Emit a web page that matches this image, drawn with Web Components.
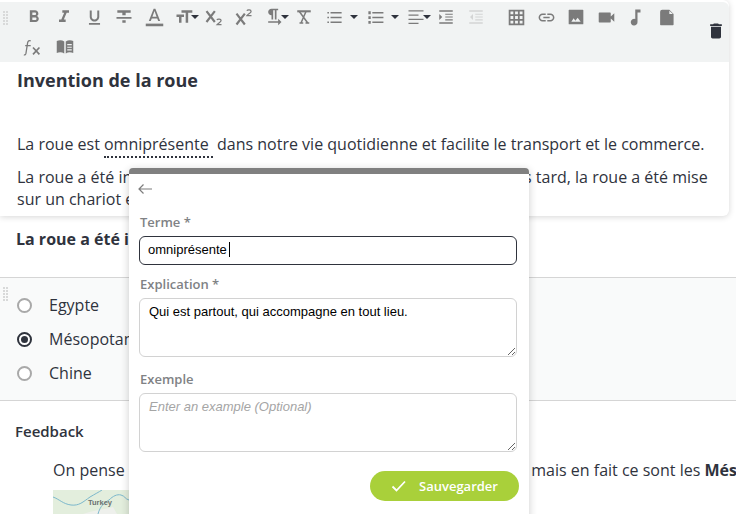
<!DOCTYPE html>
<html lang="fr">
<head>
<meta charset="utf-8">
<title>Invention de la roue</title>
<style>
  html, body { margin: 0; height: 100%; overflow: hidden; background: #fff; }
  body { font-family: "Open Sans", sans-serif; color: #2f333d; font-size: 16px; }
  #page { position: relative; height: 514px; overflow: hidden; }
</style>
</head>
<body>
<div id="page">
  <editor-card>
    <rich-toolbar slot="tb"></rich-toolbar>
    <h3 slot="title">Invention de la roue</h3>
    <p>La roue est <gloss-term>omniprésente&nbsp;</gloss-term> dans notre vie quotidienne et facilite le transport et le commerce.</p>
    <p>La roue a été inventée en Mésopotamie, il y a environ 5 500 <span style="margin-right:2px">ans.</span> Plus tard, la roue a été mise<br>sur un chariot et attelée à des animaux.</p>
  </editor-card>
  <question-title>La roue a été inventée où ?</question-title>
  <option-list>
    <radio-option>Egypte</radio-option>
    <radio-option checked>Mésopotamie</radio-option>
    <radio-option>Chine</radio-option>
  </option-list>
  <feedback-block>
    On pense souvent que ce sont les Grecs qui ont inventé la roue, mais en fait ce sont les <b>Mésopotamiens</b>
  </feedback-block>
  <term-popup>
    <form-field label="Terme *" kind="input">omniprésente</form-field>
    <form-field label="Explication *" kind="area">Qui est partout, qui accompagne en tout lieu.</form-field>
    <form-field label="Exemple" kind="area" placeholder>Enter an example (Optional)</form-field>
    <save-button>Sauvegarder</save-button>
  </term-popup>
</div>

<script>
// toolbar icons, 24x24 box
const ICONS = {
  bold: '<path d="M15.6 10.79c.97-.67 1.65-1.77 1.65-2.79 0-2.26-1.75-4-4-4H7v14h7.04c2.09 0 3.71-1.7 3.71-3.79 0-1.52-.86-2.82-2.15-3.42zM10 6.5h3c.83 0 1.5.67 1.5 1.5s-.67 1.5-1.5 1.5h-3v-3zm3.5 9H10v-3h3.5c.83 0 1.5.67 1.5 1.5s-.67 1.5-1.5 1.5z"/>',
  italic: '<path d="M10 4v3h2.21l-3.42 8H6v3h8v-3h-2.21l3.42-8H18V4z"/>',
  underline: '<path d="M12 17c3.31 0 6-2.69 6-6V3h-2.5v8c0 1.93-1.57 3.5-3.5 3.5S8.5 12.93 8.5 11V3H6v8c0 3.31 2.69 6 6 6zm-7 2v2h14v-2H5z"/>',
  strike: '<path d="M10 19h4v-3h-4v3zM4 4v3h6v3h4V7h6V4H4zM3 14h18v-2H3v2z"/>',
  color: '<path d="M11 2L5.5 16h2.25l1.12-3h6.25l1.12 3h2.25L13 2h-2zm-1.38 9L12 4.67 14.38 11H9.62z"/><rect x="2" y="19" width="20" height="3"/>',
  size: '<path d="M9 4v3h5v12h3V7h5V4H9zm-6 8h3v7h3v-7h3V9H3v3z"/>',
  sub: '<path d="M3 5l10 13M13 5L3 18" fill="none" stroke="currentColor" stroke-width="2.6"/><path d="M15.5 15.5c.6-1.4 5-1.7 5 .8 0 2-3.2 2.5-5 5H21" fill="none" stroke="currentColor" stroke-width="1.5"/>',
  sup: '<path d="M3 8l10 13M13 8L3 21" fill="none" stroke="currentColor" stroke-width="2.6"/><path d="M15.5 4.500c.6-1.400 5-1.700 5 .8 0 2-3.200 2.500-5 5H21" fill="none" stroke="currentColor" stroke-width="1.5"/>',
  para: '<path d="M9 10v5h2V4h2v11h2V4h2V2H9C6.79 2 5 3.79 5 6s1.79 4 4 4zm12 8l-4-4v3H5v2h12v3l4-4z"/>',
  clear: '<path d="M3 3h18v2.8H3z"/><path d="M6 5l11 15M14.5 5L8 20M6 20h5M14 20h5" fill="none" stroke="currentColor" stroke-width="2"/>',
  ul: '<path d="M3 5h2v2H3zM3 11h2v2H3zM3 17h2v2H3zM7 5h14v2H7zM7 11h14v2H7zM7 17h14v2H7z"/>',
  ol: '<path d="M3 4h3v4H3zM3 10.5h3V14H3zM3 16.5h3V20H3zM8 5h14v2H8zM8 11h14v2H8zM8 17h14v2H8z"/>',
  align: '<path d="M3 4h18v1.5H3zM3 9h12v1.5H3zM3 14h18v1.5H3zM3 19h12v1.5H3z"/>',
  indent: '<path d="M3 3h18v2H3zM11 7.5h10V9H11zM11 11.2h10v1.5H11zM11 15h10v1.5H11zM3 19h18v2H3zM3 8l4 4-4 4z"/>',
  outdent: '<path d="M3 3h18v2H3zM11 7.5h10V9H11zM11 11.2h10v1.5H11zM11 15h10v1.5H11zM3 19h18v2H3zM8 8l-4 4 4 4z"/>',
  table: '<path fill-rule="evenodd" d="M1 1h22v22H1zM3.500 3.500v4h4v-4zM10 3.500v4h4v-4zM16.500 3.500v4h4v-4zM3.500 10v4h4v-4zM10 10v4h4v-4zM16.500 10v4h4v-4zM3.500 16.500v4h4v-4zM10 16.500v4h4v-4zM16.500 16.500v4h4v-4z"/>',
  link: '<path d="M3.9 12c0-1.71 1.39-3.1 3.1-3.1h4V7H7c-2.76 0-5 2.24-5 5s2.24 5 5 5h4v-1.9H7c-1.71 0-3.1-1.39-3.1-3.1zM8 13h8v-2H8v2zm9-6h-4v1.9h4c1.71 0 3.1 1.39 3.1 3.1s-1.39 3.1-3.1 3.1h-4V17h4c2.76 0 5-2.24 5-5s-2.24-5-5-5z"/>',
  image: '<path fill-rule="evenodd" d="M2 1h20a1 1 0 0 1 1 1v20a1 1 0 0 1-1 1H2a1 1 0 0 1-1-1V2a1 1 0 0 1 1-1zM5 19h14l-4.500-6-3.500 4.500L8.500 14z"/>',
  video: '<path d="M1 6a1 1 0 0 1 1-1h15a1 1 0 0 1 1 1v4.500L23 6v12l-5-4.500V18a1 1 0 0 1-1 1H2a1 1 0 0 1-1-1z"/>',
  music: '<path d="M11 2v12.550A4.500 4.500 0 1 0 14 18.500V6h4V2z"/>',
  file: '<path d="M6 1h10l6 6v15a1 1 0 0 1-1 1H4a1 1 0 0 1-1-1V4a3 3 0 0 1 3-3zM16 2.500V7h5z" fill-rule="evenodd"/>',
  fx: '<path d="M9.500 5.200c-1.800-.6-3 .2-3.400 2.300L4.300 19c-.3 1.500-1 1.900-2.300 1.500" fill="none" stroke="currentColor" stroke-width="1.4"/><path d="M3.500 10.500h6" stroke="currentColor" stroke-width="1.4"/><path d="M12 12.500l7 7.500M19 12.500L12 20" stroke="currentColor" stroke-width="1.8"/>',
  book: '<path fill-rule="evenodd" d="M1 4c3-1.500 7-1.500 10 .5v16c-3-2-7-2-10-.5zM13 4.500c3-2 7-2 10-.5v16c-3-1.500-7-1.500-10 .5zM15 8v1.500h6V8zM15 11.500v1.500h6v-1.500zM15 15v1.500h6V15z"/>',
  trash: '<path d="M6 19c0 1.100.9 2 2 2h8c1.100 0 2-.9 2-2V7H6v12zM19 4h-3.500l-1-1h-5l-1 1H5v2h14V4z"/>'
};

function dots(cols, rows) {
  let out = '';
  for (let c = 0; c < cols; c++) {
    for (let r = 0; r < rows; r++) {
      out += `<rect x="${c * 3}" y="${r * 3}" width="2" height="2"/>`;
    }
  }
  return `<svg width="${cols * 3}" height="${rows * 3}" fill="#d8d9d9">${out}</svg>`;
}

class ToolBtn extends HTMLElement {
  connectedCallback() {
    const w = this.getAttribute('w') || 30;
    const s = this.getAttribute('s') || 20;
    const caret = this.getAttribute('caret');
    const color = this.getAttribute('color') || '#7b7b7b';
    this.attachShadow({ mode: 'open' });
    this.shadowRoot.innerHTML = `
      <style>
        :host { display: block; position: relative; width: ${w}px; height: 30px; color: ${color}; }
        .in { display: flex; align-items: center; justify-content: center; height: 100%; }
        .in.left { justify-content: flex-start; padding-left: ${this.getAttribute('pad') || 0}px; }
        svg { fill: currentColor; display: block; }
        .caret { position: absolute; top: 13px; left: ${caret}px; border: 4px solid transparent; border-top: 4px solid #2f333d; border-bottom: 0; }
      </style>
      <div class="in ${this.hasAttribute('pad') ? 'left' : ''}">
        <svg width="${s}" height="${s}" viewBox="0 0 24 24">${ICONS[this.getAttribute('icon')]}</svg>
      </div>
      ${caret ? '<span class="caret"></span>' : ''}`;
  }
}
customElements.define('tool-btn', ToolBtn);

class RichToolbar extends HTMLElement {
  connectedCallback() {
    this.attachShadow({ mode: 'open' });
    this.shadowRoot.innerHTML = `
      <style>
        :host { display: flex; align-items: center; height: 60px; margin-top: 2px; background: #f1f3f3; border-radius: 0 6px 0 0; position: relative; }
        .grip { width: 19px; flex: none; padding-left: 3px; box-sizing: border-box; align-self: flex-start; padding-top: 7px; }
        .rows { flex: 1; }
        .row { display: flex; height: 30px; }
        .trash { width: 30px; margin: 0 -2px 2px 0; display: flex; justify-content: center; }
        .gap { width: 10px; }
      </style>
      <div class="grip">${dots(2, 5)}</div>
      <div class="rows">
        <div class="row">
          <tool-btn icon="bold"></tool-btn><tool-btn icon="italic"></tool-btn><tool-btn icon="underline" s="19"></tool-btn>
          <tool-btn icon="strike"></tool-btn><tool-btn icon="color" s="21"></tool-btn><tool-btn icon="size" s="20" caret="22"></tool-btn>
          <tool-btn icon="sub" s="20"></tool-btn><tool-btn icon="sup" s="20"></tool-btn><tool-btn icon="para" s="20" caret="22"></tool-btn>
          <tool-btn icon="clear" s="18"></tool-btn><tool-btn icon="ul" s="19" w="42" pad="6" caret="31"></tool-btn>
          <tool-btn icon="ol" s="19" w="44" pad="5" caret="30"></tool-btn><tool-btn icon="align" s="20" w="26" pad="1" caret="18"></tool-btn>
          <tool-btn icon="indent" s="18"></tool-btn><tool-btn icon="outdent" s="18" color="#d4d5d5"></tool-btn><div class="gap"></div>
          <tool-btn icon="table" s="17"></tool-btn><tool-btn icon="link" s="19"></tool-btn><tool-btn icon="image" s="16"></tool-btn>
          <tool-btn icon="video" s="17"></tool-btn><tool-btn icon="music" s="18"></tool-btn><tool-btn icon="file" s="17"></tool-btn>
        </div>
        <div class="row" style="margin-left:-1px">
          <tool-btn icon="fx" s="22"></tool-btn><tool-btn icon="book" s="18" w="34"></tool-btn>
        </div>
      </div>
      <div class="trash"><tool-btn icon="trash" color="#2f333d" s="20"></tool-btn></div>`;
  }
}
customElements.define('rich-toolbar', RichToolbar);

class EditorCard extends HTMLElement {
  connectedCallback() {
    this.attachShadow({ mode: 'open' });
    this.shadowRoot.innerHTML = `
      <style>
        :host { display: block; width: 729px; height: 216px; background: #fff; border-radius: 0 6px 6px 0; box-shadow: 0 1px 6px rgba(0,0,0,.16); overflow: hidden; }
        .body { padding: 6px 0 0 17px; }
        ::slotted(h3) { margin: 0 0 41px; font-size: 18px; line-height: 24px; font-weight: 700; color: #2f333d; }
        ::slotted(p) { margin: 0 0 8px; line-height: 22px; white-space: nowrap; }
      </style>
      <slot name="tb"></slot>
      <div class="body"><slot name="title"></slot><slot></slot></div>`;
  }
}
customElements.define('editor-card', EditorCard);

class GlossTerm extends HTMLElement {
  connectedCallback() {
    this.attachShadow({ mode: 'open' });
    this.shadowRoot.innerHTML = `
      <style>:host { display: inline-block; line-height: 22px; border-bottom: 2px dotted #2f333d; height: 23px; }</style>
      <slot></slot>`;
  }
}
customElements.define('gloss-term', GlossTerm);

class QuestionTitle extends HTMLElement {
  connectedCallback() {
    this.attachShadow({ mode: 'open' });
    this.shadowRoot.innerHTML = `
      <style>:host { display: block; padding: 12px 0 0 16px; height: 61px; box-sizing: border-box; line-height: 22px; font-weight: 700; white-space: nowrap; font-size: 16px; }
      </style><slot></slot>`;
  }
}
customElements.define('question-title', QuestionTitle);

class OptionList extends HTMLElement {
  connectedCallback() {
    this.attachShadow({ mode: 'open' });
    this.shadowRoot.innerHTML = `
      <style>
        :host { display: block; height: 124px; box-sizing: border-box; background: #f9fafa; border-top: 1px solid #d5d5d5; border-bottom: 1px solid #d5d5d5; position: relative; padding-top: 10px; }
        .grip { position: absolute; left: 3px; top: 7px; }
      </style>
      <div class="grip">${dots(2, 5)}</div>
      <slot></slot>`;
  }
}
customElements.define('option-list', OptionList);

class RadioOption extends HTMLElement {
  connectedCallback() {
    const on = this.hasAttribute('checked');
    this.attachShadow({ mode: 'open' });
    this.shadowRoot.innerHTML = `
      <style>
        :host { display: flex; align-items: center; gap: 17px; height: 34px; padding-left: 17px; white-space: nowrap; }
        .r { width: 15px; height: 15px; border-radius: 50%; box-sizing: border-box; border: 2px solid ${on ? '#2f333d' : '#a9a9a9'}; display: flex; align-items: center; justify-content: center; background: #fff; }
        .r i { width: 7px; height: 7px; border-radius: 50%; background: #2f333d; display: ${on ? 'block' : 'none'}; }
      </style>
      <span class="r"><i></i></span><span><slot></slot></span>`;
  }
}
customElements.define('radio-option', RadioOption);

class FeedbackBlock extends HTMLElement {
  connectedCallback() {
    this.attachShadow({ mode: 'open' });
    this.shadowRoot.innerHTML = `
      <style>
        :host { display: block; padding: 19px 0 0 15px; white-space: nowrap; }
        h4 { margin: 0 0 17px; font-size: 15px; line-height: 22px; font-weight: 600; }
        .txt { margin-left: 38px; line-height: 22px; }
        svg { display: block; margin: 9px 0 0 38px; }
      </style>
      <h4>Feedback</h4>
      <div class="txt"><slot></slot></div>
      <svg width="300" height="30" viewBox="0 0 300 30">
        <rect width="300" height="30" fill="#e3eedd"/>
        <path d="M30 24C40 20 50 20 60 17L64 24 40 28z" fill="#eef0ec"/>
        <path d="M0 7C6 9 10 14 18 15S30 12 37 7C42 4 46 2 49 0" fill="none" stroke="#7cb8cc" stroke-width="1"/>
        <path d="M45 24C47 16 52 12 56 10C60 6 64 4 68 5S72 9 76 10" fill="none" stroke="#7cb8cc" stroke-width="1"/>
        <text x="35" y="15" font-family="Liberation Sans, sans-serif" font-size="7.5" font-weight="700" fill="#6b7270">Turkey</text>
      </svg>`;
  }
}
customElements.define('feedback-block', FeedbackBlock);

class TermPopup extends HTMLElement {
  connectedCallback() {
    this.attachShadow({ mode: 'open' });
    this.shadowRoot.innerHTML = `
      <style>
        :host { position: absolute; left: 129px; top: 168px; width: 400px; height: 360px; box-sizing: border-box; background: #fff; border-top: 6px solid #808080; border-radius: 4px 4px 0 0; box-shadow: 0 2px 8px rgba(0,0,0,.2); padding: 0 12px 0 10px; }
        .back { display: block; margin: 7px 0 15px -2px; }
      </style>
      <svg class="back" width="16" height="16" viewBox="0 0 16 16" fill="none" stroke="#7d7d7d" stroke-width="1.2"><path d="M15 8H2M6.5 3.5L2 8l4.5 4.5"/></svg>
      <slot></slot>`;
  }
}
customElements.define('term-popup', TermPopup);

class FormField extends HTMLElement {
  connectedCallback() {
    const isInput = this.getAttribute('kind') === 'input';
    const ph = this.hasAttribute('placeholder');
    this.attachShadow({ mode: 'open' });
    this.shadowRoot.innerHTML = `
      <style>
        :host { display: block; margin-bottom: ${isInput ? 9 : 12}px; }
        label { display: block; font-size: 13px; font-weight: 600; color: #808285; line-height: 20px; margin-bottom: 4px; padding-left: 1px; }
        .box { box-sizing: border-box; width: 378px; font: ${ph ? 'italic ' : ''}13px/16px "Liberation Sans", sans-serif; color: ${ph ? '#a5a5a5' : '#000'}; background: #fff; border-radius: 6px; }
        .input { height: 29px; border: 1.5px solid #2f333d; padding: 5px 8px; white-space: nowrap; }
        .input i { display: inline-block; width: 1px; height: 15px; margin-left: 2px; background: #000; vertical-align: -3px; }
        .area { height: 59px; border: 1px solid #d2d2d2; padding: 5px 9px; overflow: auto; resize: vertical; }
      </style>
      <label>${this.getAttribute('label')}</label>
      <div class="box ${isInput ? 'input' : 'area'}"><slot></slot>${isInput ? '<i></i>' : ''}</div>`;
  }
}
customElements.define('form-field', FormField);

class SaveButton extends HTMLElement {
  connectedCallback() {
    this.attachShadow({ mode: 'open' });
    this.shadowRoot.innerHTML = `
      <style>
        :host { display: flex; width: 149px; height: 30px; margin: 19px 0 0 231px; align-items: center; justify-content: center; gap: 12px; background: #a9d03a; color: #fff; border-radius: 15px; font-size: 13px; font-weight: 600; }
        svg { display: block; }
      </style>
      <svg width="16" height="14" viewBox="0 0 16 14" fill="none" stroke="#fff" stroke-width="1.8"><path d="M1.5 7.5L5.5 11.5 14 2.5"/></svg>
      <span><slot></slot></span>`;
  }
}
customElements.define('save-button', SaveButton);
</script>
</body>
</html>
